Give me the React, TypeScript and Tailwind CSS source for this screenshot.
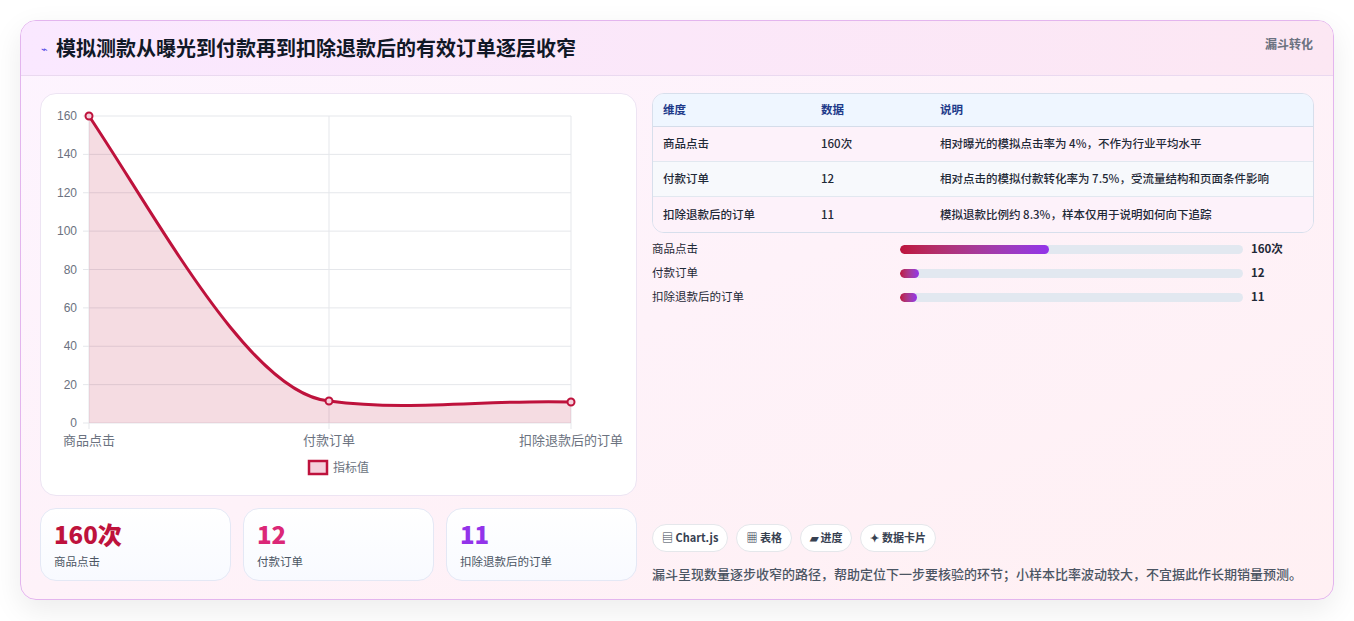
import React from "react";

const rows = [
  ["商品点击", "160次", "相对曝光的模拟点击率为 4%，不作为行业平均水平"],
  ["付款订单", "12", "相对点击的模拟付款转化率为 7.5%，受流量结构和页面条件影响"],
  ["扣除退款后的订单", "11", "模拟退款比例约 8.3%，样本仅用于说明如何向下追踪"],
];
const bars = [
  ["商品点击", 43.5, "160次"],
  ["付款订单", 5.5, "12"],
  ["扣除退款后的订单", 5, "11"],
] as const;

function Chart() {
  const x0 = 48, x1 = 530, y0 = 22, y1 = 329;
  const ys = [0, 20, 40, 60, 80, 100, 120, 140, 160];
  const yp = (v: number) => y1 - (v / 160) * (y1 - y0);
  const path = `M48,22 C120,130 210,300 288,307 C370,318 450,305 530,308`;
  return (
    <svg width="597" height="403" className="block">
      {ys.map((v) => (
        <g key={v}>
          <line x1={x0 - 6} x2={x1} y1={yp(v)} y2={yp(v)} stroke="#e5e7eb" />
          <text x={36} y={yp(v) + 4} textAnchor="end" fontSize="12" fill="#6b7280" fontFamily="Liberation Sans, sans-serif">{v}</text>
        </g>
      ))}
      {[48, 288, 530].map((x) => (
        <line key={x} x1={x} x2={x} y1={y0} y2={y1 + 6} stroke="#e5e7eb" />
      ))}
      <path d={`${path} L530,329 L48,329 Z`} fill="#be123c" fillOpacity="0.15" />
      <path d={path} fill="none" stroke="#be123c" strokeWidth="3" />
      {[[48, 22], [288, 307], [530, 308]].map(([x, y]) => (
        <circle key={x} cx={x} cy={y} r="3.5" fill="#f5d0dc" stroke="#be123c" strokeWidth="2" />
      ))}
      {[[48, "商品点击", "middle"], [288, "付款订单", "middle"], [582, "扣除退款后的订单", "end"]].map(([x, t, a]) => (
        <text key={t as string} x={x as number} y={351} textAnchor={a as any} fontSize="13" fill="#6b7280" fontFamily="Noto Sans CJK SC, sans-serif">{t}</text>
      ))}
      <rect x="268" y="367" width="18" height="13" fill="#f5d0dc" stroke="#be123c" strokeWidth="2.5" />
      <text x="292" y="378" fontSize="12" fill="#6b7280" fontFamily="Noto Sans CJK SC, sans-serif">指标值</text>
    </svg>
  );
}

export default function App() {
  return (
    <div className="min-h-[621px] bg-white p-5 pb-0" style={{ fontFamily: '"Noto Sans CJK SC", "Noto Sans", sans-serif' }}>
      <div className="w-[1314px] h-[580px] rounded-2xl border border-[#e3b5ee] bg-gradient-to-br from-[#fdf4ff] to-[#fff0f3] shadow-[0_10px_30px_rgba(0,0,0,0.08)] overflow-hidden flex flex-col">
        <div className="h-[55px] flex items-center justify-between px-5 bg-gradient-to-r from-[#fae8ff] to-[#fce7f3] border-b border-[#ead9f0]">
          <div className="flex items-center gap-2">
            <span className="text-[11px] text-[#4f46e5]">⌁</span>
            <h1 className="text-[20px] font-bold text-[#111827]">模拟测款从曝光到付款再到扣除退款后的有效订单逐层收窄</h1>
          </div>
          <span className="text-[12px] font-bold text-[#6b7280] self-start mt-[14px]">漏斗转化</span>
        </div>
        <div className="flex gap-[15px] pl-[19px] pt-[17px]">
          <div className="w-[597px] flex flex-col gap-3">
            <div className="h-[403px] rounded-2xl bg-white border border-[#ede4f3]"><Chart /></div>
            <div className="grid grid-cols-3 gap-3">
              {[["160次", "商品点击", "text-[#be123c]"], ["12", "付款订单", "text-[#db2777]"], ["11", "扣除退款后的订单", "text-[#9333ea]"]].map(([v, l, c]) => (
                <div key={l} className="h-[73px] rounded-2xl border border-[#e4e8f5] bg-gradient-to-b from-white to-[#f8faff] px-[13px] pt-[9px]">
                  <div className={`text-[24px] font-extrabold leading-[32px] ${c}`}>{v}</div>
                  <div className="text-[11.5px] text-[#4b5563] mt-[3px]">{l}</div>
                </div>
              ))}
            </div>
          </div>
          <div className="w-[662px] flex flex-col h-[490px]">
            <div className="rounded-xl border border-[#d7dfec] overflow-hidden text-[11.5px]">
              <div className="flex h-[33px] items-center bg-[#eff6ff] border-b border-[#d5ddea] font-bold text-[#1e3a8a]">
                <div className="w-[168px] pl-[10px]">维度</div><div className="w-[119px]">数据</div><div>说明</div>
              </div>
              {rows.map((r, i) => (
                <div key={i} className={`flex h-[35px] items-center text-[#1f2937] font-medium ${i === 1 ? "bg-[#f7f9fc]" : "bg-[#fdf2fa]"} ${i < 2 ? "border-b border-[#e2e8f0]" : ""}`}>
                  <div className="w-[168px] pl-[10px]">{r[0]}</div><div className="w-[119px]">{r[1]}</div><div>{r[2]}</div>
                </div>
              ))}
            </div>
            <div className="flex flex-col gap-[10px] mt-[9px]">
              {bars.map(([l, p, v]) => (
                <div key={l} className="flex items-center h-[14px] text-[11.5px] text-[#1f2937]">
                  <div className="w-[248px]">{l}</div>
                  <div className="w-[343px] h-[9px] rounded-full bg-[#e2e8f0] overflow-hidden">
                    <div className="h-full rounded-full bg-gradient-to-r from-[#be123c] to-[#9333ea]" style={{ width: `${p}%` }} />
                  </div>
                  <div className="ml-2 font-bold">{v}</div>
                </div>
              ))}
            </div>
            <div className="mt-auto flex gap-2 mb-[12px]">
              {["▤ Chart.js", "▦ 表格", "▰ 进度", "✦ 数据卡片"].map((c) => (
                <span key={c} className="h-[28px] px-[9px] flex items-center rounded-full bg-white border border-[#e5e7eb] text-[11px] font-bold text-[#374151]">{c}</span>
              ))}
            </div>
            <p className="text-[13px] text-[#4b5563] font-medium">漏斗呈现数量逐步收窄的路径，帮助定位下一步要核验的环节；小样本比率波动较大，不宜据此作长期销量预测。</p>
          </div>
        </div>
      </div>
    </div>
  );
}
